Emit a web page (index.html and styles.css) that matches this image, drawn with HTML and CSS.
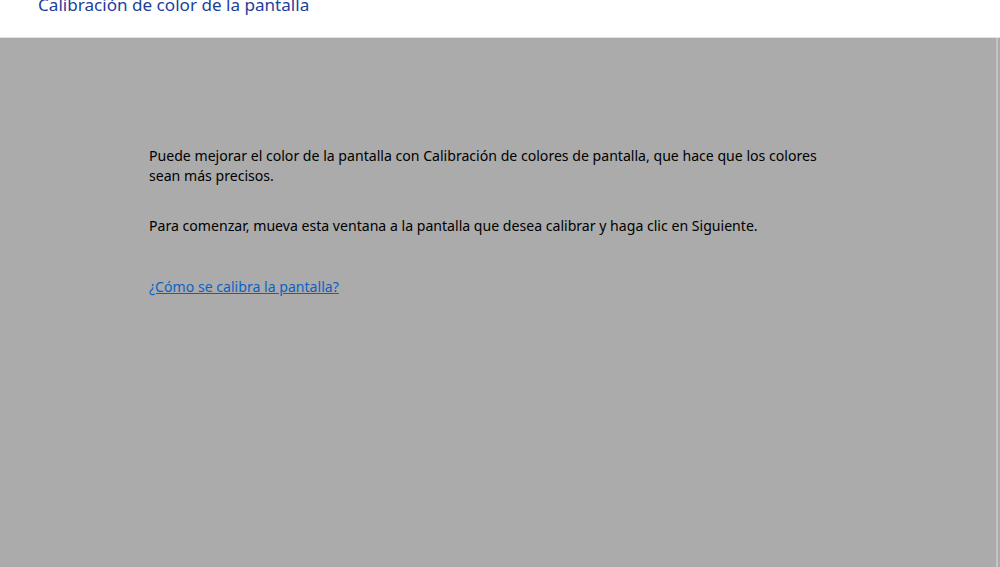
FILE: index.html
```html
<!DOCTYPE html>
<html lang="es">
<head>
    <meta charset="UTF-8">
    <title>Calibración de color de la pantalla</title>
    <link rel="stylesheet" href="styles.css">
</head>
<body>

    <!-- Window header -->
    <header class="wizard-header">
        <h1 class="wizard-title">Calibración de color de la pantalla</h1>
    </header>

    <!-- Wizard page content -->
    <main class="wizard-body">
        <p class="intro">Puede mejorar el color de la pantalla con Calibración de colores de pantalla, que hace que los colores sean más precisos.</p>
        <p class="intro">Para comenzar, mueva esta ventana a la pantalla que desea calibrar y haga clic en Siguiente.</p>
        <a class="help-link" href="#">¿Cómo se calibra la pantalla?</a>
    </main>

</body>
</html>
```

FILE: styles.css
```css
html, body {
    height: 100%;
}

body {
    margin: 0;
    font-family: 'Noto Sans', 'Open Sans', sans-serif;
    background: #ababab;
    display: flex;
    flex-direction: column;
    overflow: hidden;
}

.wizard-header {
    height: 37px;
    background: #ffffff;
    border-bottom: 1px solid #e2e2e2;
    padding-left: 38px;
    flex-shrink: 0;
}

.wizard-title {
    margin: -7px 0 0 0;
    font-size: 17.1px;
    font-weight: normal;
    line-height: 24px;
    color: #1c3f9c;
}

.wizard-body {
    flex: 1;
    padding: 108px 0 0 149px;
    border-right: 2px solid #c4c4c4;
    margin-right: 2px;
}

.intro {
    margin: 0 0 30px 0;
    max-width: 690px;
    font-size: 14.1px;
    line-height: 20px;
    color: #000000;
}

.help-link {
    display: inline-block;
    margin-top: 11px;
    font-size: 14.1px;
    line-height: 20px;
    color: #0a63c4;
}
```
